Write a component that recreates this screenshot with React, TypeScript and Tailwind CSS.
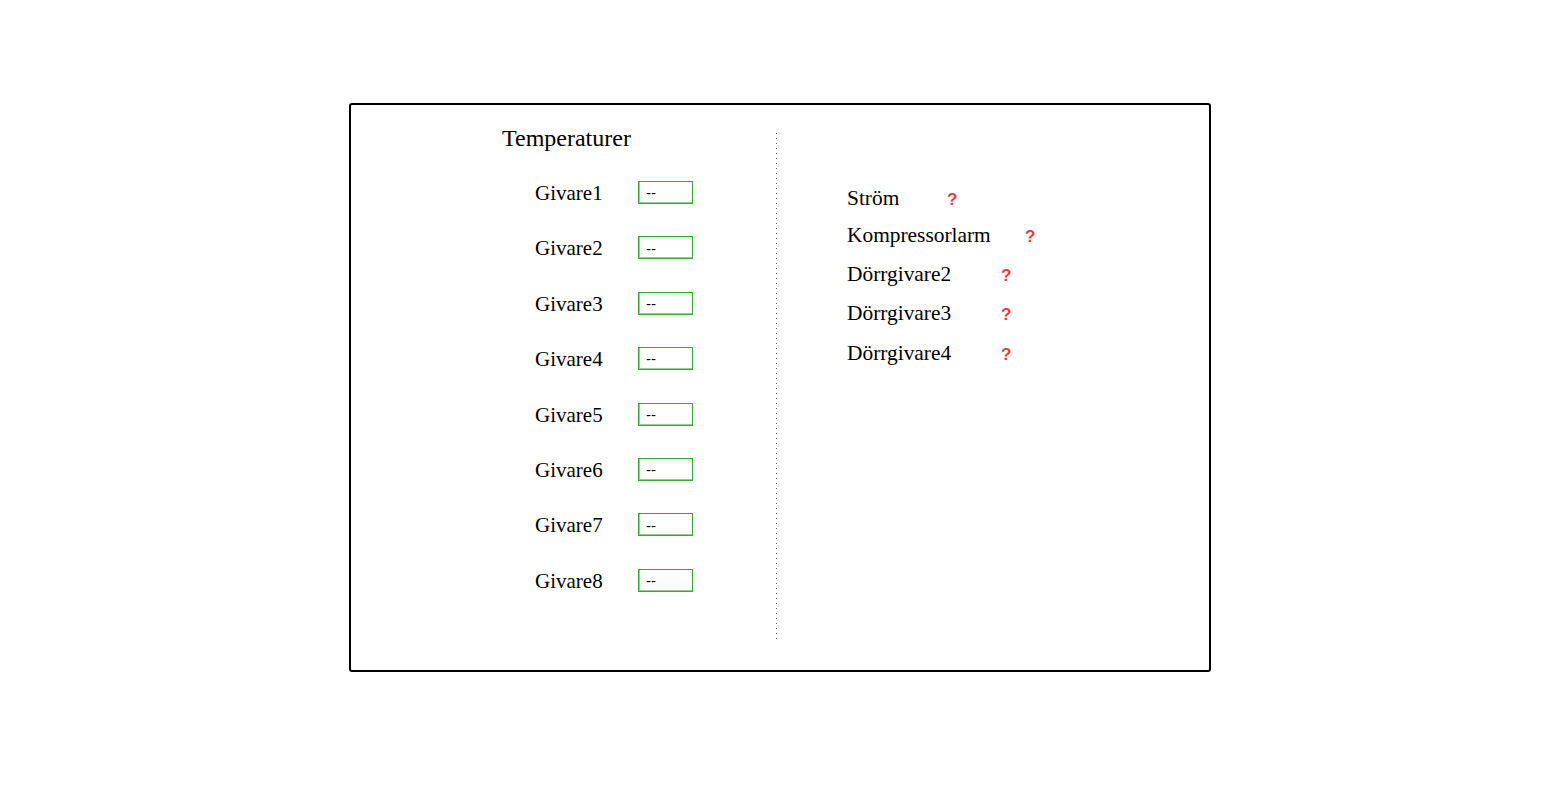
import React from 'react'

const sensors = ['Givare1', 'Givare2', 'Givare3', 'Givare4', 'Givare5', 'Givare6', 'Givare7', 'Givare8']

// label width sets where the red status mark lands
const alarms = [
  { label: 'Ström', w: 'w-[100px]', mt: 'mt-[81px]' },
  { label: 'Kompressorlarm', w: 'w-[178px]', mt: 'mt-[11px]' },
  { label: 'Dörrgivare2', w: 'w-[154px]', mt: 'mt-[13px]' },
  { label: 'Dörrgivare3', w: 'w-[154px]', mt: 'mt-[13px]' },
  { label: 'Dörrgivare4', w: 'w-[154px]', mt: 'mt-[14px]' },
]

function SensorRow({ name }: { name: string }) {
  return (
    <div className="flex items-center h-[23px]">
      <span className="w-[103px] text-[21px] leading-[23px] pt-[2px] text-black">{name}</span>
      <div className="w-[55px] h-[23px] border border-[#33aa33] shadow-[inset_1px_-1px_0_#8fd08f] flex items-center pl-[7px] pt-[2px] text-[15px] font-['Liberation_Sans',Arial,sans-serif] text-black">
        --
      </div>
    </div>
  )
}

export default function App() {
  return (
    <div className="w-[1568px] h-[810px] bg-white pt-[103px] pl-[349px] font-['Liberation_Serif','Times_New_Roman',serif]">
      <div className="w-[862px] h-[569px] border-2 border-black rounded-[3px] flex">
        {/* temperatures */}
        <div className="w-[425px] pl-[151px] pt-[19px]">
          <div className="text-[24px] leading-[28px] text-black">Temperaturer</div>
          <div className="ml-[33px] mt-[29px] flex flex-col gap-[32.4px]">
            {sensors.map((s) => (
              <SensorRow key={s} name={s} />
            ))}
          </div>
        </div>

        <div className="w-px h-[507px] mt-[28px] bg-[repeating-linear-gradient(to_bottom,#555_0,#555_1px,transparent_1px,transparent_5px)]" />

        {/* alarms */}
        <div className="pl-[70px] flex flex-col">
          {alarms.map((a) => (
            <div key={a.label} className={`${a.mt} flex items-baseline leading-[24px]`}>
              <span className={`${a.w} text-[21.4px] text-black`}>{a.label}</span>
              <span className="text-[17px] font-semibold text-[#f03a3a] font-['Liberation_Sans',Arial,sans-serif]">?</span>
            </div>
          ))}
        </div>
      </div>
    </div>
  )
}
